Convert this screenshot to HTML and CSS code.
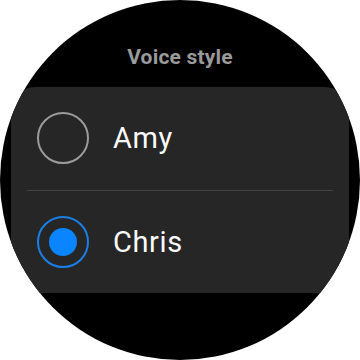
FILE: index.html
```html
<!DOCTYPE html>
<html lang="en">
<head>
  <meta charset="UTF-8" />
  <meta name="viewport" content="width=device-width, initial-scale=1.0" />
  <title>Voice style</title>
  <link rel="stylesheet" href="styles.css">
</head>
<body>
  <div class="watch">
    <h1 class="title">Voice style</h1>
    <div class="card">
      <label class="row">
        <span class="radio"></span>
        <span class="name">Amy</span>
      </label>
      <label class="row row-divided">
        <span class="radio radio-on"><span class="dot"></span></span>
        <span class="name">Chris</span>
      </label>
    </div>
  </div>
</body>
</html>
```

FILE: styles.css
```css
html, body { margin: 0; background: #fff; }
body { font-family: Roboto, "Liberation Sans", sans-serif; }
.watch {
  width: 360px;
  height: 360px;
  border-radius: 50%;
  background: #000;
  overflow: hidden;
  display: flex;
  flex-direction: column;
}
.title {
  margin: 45px 0 17px;
  font-size: 21px;
  line-height: 25px;
  font-weight: 700;
  letter-spacing: 0.2px;
  color: #9a9a9a;
  text-align: center;
}
.card {
  margin: 0 11px;
  height: 206px;
  border-radius: 24px;
  background: #262626;
  display: flex;
  flex-direction: column;
}
.row {
  flex: 1;
  display: flex;
  align-items: center;
  gap: 24px;
  padding-left: 26px;
}
.row-divided {
  margin: 0 16px;
  padding-left: 10px;
  border-top: 1px solid #434343;
}
.radio {
  box-sizing: border-box;
  width: 52px;
  height: 52px;
  border-radius: 50%;
  border: 2px solid #9b9b9b;
  display: flex;
  align-items: center;
  justify-content: center;
}
.radio-on { border-color: #1a7fe6; }
.dot {
  width: 28px;
  height: 28px;
  border-radius: 50%;
  background: #0a84ff;
}
.name {
  font-size: 29px;
  letter-spacing: 0.6px;
  color: #fafafa;
}
```
